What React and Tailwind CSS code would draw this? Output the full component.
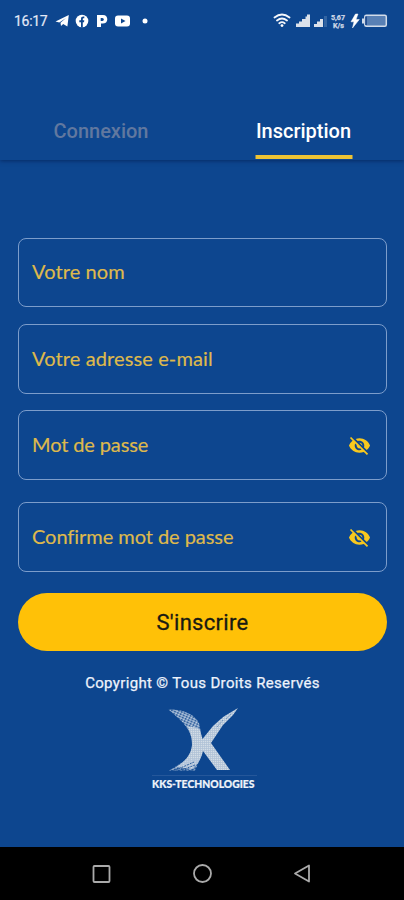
import React from "react";
import { MdVisibilityOff } from "react-icons/md";

function StatusBar() {
  return (
    <div className="flex h-[42px] items-center justify-between pl-[14px] pr-[16px] text-[#e3e9f7]">
      <div className="flex items-center">
        <span className="w-[41px] text-[14px] leading-4 tracking-[-0.3px] whitespace-nowrap [-webkit-text-stroke:0.2px_#e3e9f7]">16:17</span>
        <svg width="96" height="16" viewBox="0 0 96 16" fill="#fff">
          <path d="M0.5 8.6 13.8 2 12.4 13.6 8.2 11 6 13 5.5 9.8 11 5 4.3 9.4Z" />
          <circle cx="27" cy="8" r="6.3" />
          <path d="M26 14.5V9.2H24.3V7.2H26V5.9C26 4.2 27 3.4 29.3 3.6V5.2C28.1 5.1 27.8 5.4 27.8 6.2V7.2H29.3L29 9.2H27.8V14.5Z" fill="#0d468f" />
          <path fillRule="evenodd" d="M42 2H48C51 2 52.3 4 52.3 6.3C52.3 9 50.5 10.6 47.8 10.6H46V14H42ZM45.7 5V8H47.3C49.3 8 49.3 5 47.3 5Z" />
          <rect x="60" y="2.5" width="15" height="11" rx="3" />
          <path d="M66 5.5 70.5 8 66 10.5Z" fill="#0d468f" />
          <circle cx="90" cy="8" r="2.5" />
        </svg>
      </div>
      <svg width="115" height="18" viewBox="273 12 115 18" fill="none">
        <path d="M274.5 17.5Q282 11.5 289.5 17.5M277 20.5Q282 16.5 287 20.5M279.3 23.2Q282 21.2 284.7 23.2" stroke="#f3f6fb" strokeWidth="1.8" strokeLinecap="round" />
        <circle cx="282" cy="25.6" r="1.4" fill="#fff" />
        <path d="M296 27V23.5H299V21.5H302V19H305.5V16.5H307V14.5H310V27Z" fill="#dbe1ea" />
        <path d="M314 27V24H317V21.5H320V19H323V27Z" fill="#dbe1ea" />
        <path d="M324 16H327V27H324Z" fill="#3264a2" />
        <g fill="#cdd7e6" stroke="#cdd7e6" strokeWidth=".25" fontFamily="Roboto, sans-serif" fontWeight="700">
          <text x="331" y="19.5" fontSize="6.5" textLength="14" lengthAdjust="spacingAndGlyphs">5,67</text>
          <text x="333" y="27.8" fontSize="6.5" textLength="11" lengthAdjust="spacingAndGlyphs">K/s</text>
        </g>
        <path d="M355.5 14 351 21.8H354L352.5 28 359.3 19.5H356L358 14Z" fill="#fff" stroke="#fff" strokeWidth=".5" />
        <rect x="364.8" y="15.3" width="21.5" height="11" rx="1.5" fill="#5880b5" stroke="#d2dcea" strokeWidth="1.5" />
        <path d="M362 18.5H364V23.5H362Z" fill="#d2dcea" />
        <path d="M366 16.5V25" stroke="#123e85" strokeWidth="1.5" />
      </svg>
    </div>
  );
}

function Field({ label, secret = false, className = "", textClass = "" }) {
  return (
    <label className={`flex w-[369px] items-center justify-between rounded-[8px] border border-[#7c9dcb] pl-[13px] pr-[15px] font-[Lato,sans-serif] text-[20px] leading-6 text-[#deb94c] ${className}`}>
      <span className={`pb-[3px] whitespace-nowrap [-webkit-text-stroke:0.2px_#deb94c] ${textClass}`}>{label}</span>
      {secret && <MdVisibilityOff className="size-[23px] text-[#f8c81e]" />}
    </label>
  );
}

function CompanyLogo() {
  return (
    <svg className="mt-[13px]" width="110" height="86" viewBox="147 705 110 86">
      <defs>
        <pattern id="mesh" width="2" height="2" patternUnits="userSpaceOnUse">
          <rect width="2" height="2" fill="#afc1d6" />
          <path d="M0 0H1.3V1.3H0Z" fill="#d3dde6" />
        </pattern>
        <pattern id="dots" width="3.2" height="2.4" patternUnits="userSpaceOnUse" patternTransform="rotate(24)">
          <ellipse cx="1.5" cy="1.2" rx="1.5" ry=".95" fill="#b9cade" />
        </pattern>
        <pattern id="dotsUp" width="3.2" height="2.4" patternUnits="userSpaceOnUse" patternTransform="rotate(-24)">
          <ellipse cx="1.5" cy="1.2" rx="1.5" ry=".9" fill="#b3c5dc" />
        </pattern>
      </defs>
      <path d="M167.5 708.5C183 708 194 714 198 722L200 732 190 735C187 727 182 721 176 716Z" fill="url(#dots)" />
      <path d="M186 725C190 726 196 726 199 729L201.5 738 212 725 222 716 237 707 232 714 222 724 210 742 229 769H216L202 750C200 759 196 764 191 768L175 766C185 760 190 753 191 744 191 736 189 730 186 725Z" fill="url(#mesh)" />
      <path d="M220 718 226 712M225 718 231 712M216 726 222 719" stroke="#0d468f" strokeWidth=".5" strokeDasharray="1 1" />
      <path d="M168 769.5 177 764 187 758 199 758 194 769.5Z" fill="url(#dotsUp)" />
      <path d="M175 769 193 761M181 769 194 764" stroke="#0d468f" strokeWidth=".8" strokeDasharray="2 1" />
      <path d="M151 774.5H256" stroke="#315f9f" strokeWidth=".7" />
      <text x="151" y="787" fill="#eef3f9" stroke="#eef3f9" strokeWidth=".2" fontFamily="Lato, sans-serif" fontWeight="900" fontSize="10.5" textLength="102.5" lengthAdjust="spacingAndGlyphs">KKS-TECHNOLOGIES</text>
    </svg>
  );
}

export default function App() {
  return (
    <div className="flex h-[900px] w-[404px] flex-col overflow-hidden bg-[#0d468f] font-[Roboto,sans-serif]">
      <header className="flex h-[160px] shrink-0 flex-col justify-between shadow-[0_1px_4px_rgba(0,20,65,0.55)]">
        <StatusBar />
        <nav className="grid h-[41px] grid-cols-2 text-[20px] leading-6 font-medium">
          <div className="flex justify-center text-[#61789f]">Connexion</div>
          <div className="flex justify-center">
            <div className="flex h-[40px] w-[97px] translate-x-[0.5px] justify-center border-b-[4px] border-[#edc334] text-white">Inscription</div>
          </div>
        </nav>
      </header>
      <main className="flex flex-1 flex-col items-center pt-[78px] pr-[17px] pl-[18px]">
        <Field label="Votre nom" className="h-[69px]" textClass="tracking-[0.1px]" />
        <Field label="Votre adresse e-mail" className="mt-[17px] h-[70px]" textClass="tracking-[0.12px]" />
        <Field label="Mot de passe" secret className="mt-[16px] h-[70px]" textClass="tracking-[-0.12px]" />
        <Field label="Confirme mot de passe" secret className="mt-[22px] h-[70px]" textClass="tracking-[-0.05px] [font-variant-ligatures:common-ligatures]" />
        <button className="mt-[21px] h-[58px] w-[369px] rounded-full bg-[#ffc107] text-[22px] tracking-[0.3px] text-[#181a13] [-webkit-text-stroke:0.3px_#181a13]">S'inscrire</button>
        <p className="mt-[22px] text-[15px] leading-5 tracking-[0.34px] whitespace-nowrap text-[#eef3fc] [-webkit-text-stroke:0.25px_#eef3fc]">Copyright © Tous Droits Reservés</p>
        <CompanyLogo />
      </main>
      <footer className="flex h-[53px] shrink-0 items-center justify-center bg-black">
        <svg width="220" height="20" viewBox="92 864 220 20" fill="none" stroke="#aaa" strokeWidth="1.8">
          <rect x="93.5" y="866" width="16" height="16" rx="1" />
          <circle cx="202.5" cy="873.5" r="8.5" />
          <path d="M309 865.5V881.5L295 873.5Z" strokeLinejoin="round" />
        </svg>
      </footer>
    </div>
  );
}
